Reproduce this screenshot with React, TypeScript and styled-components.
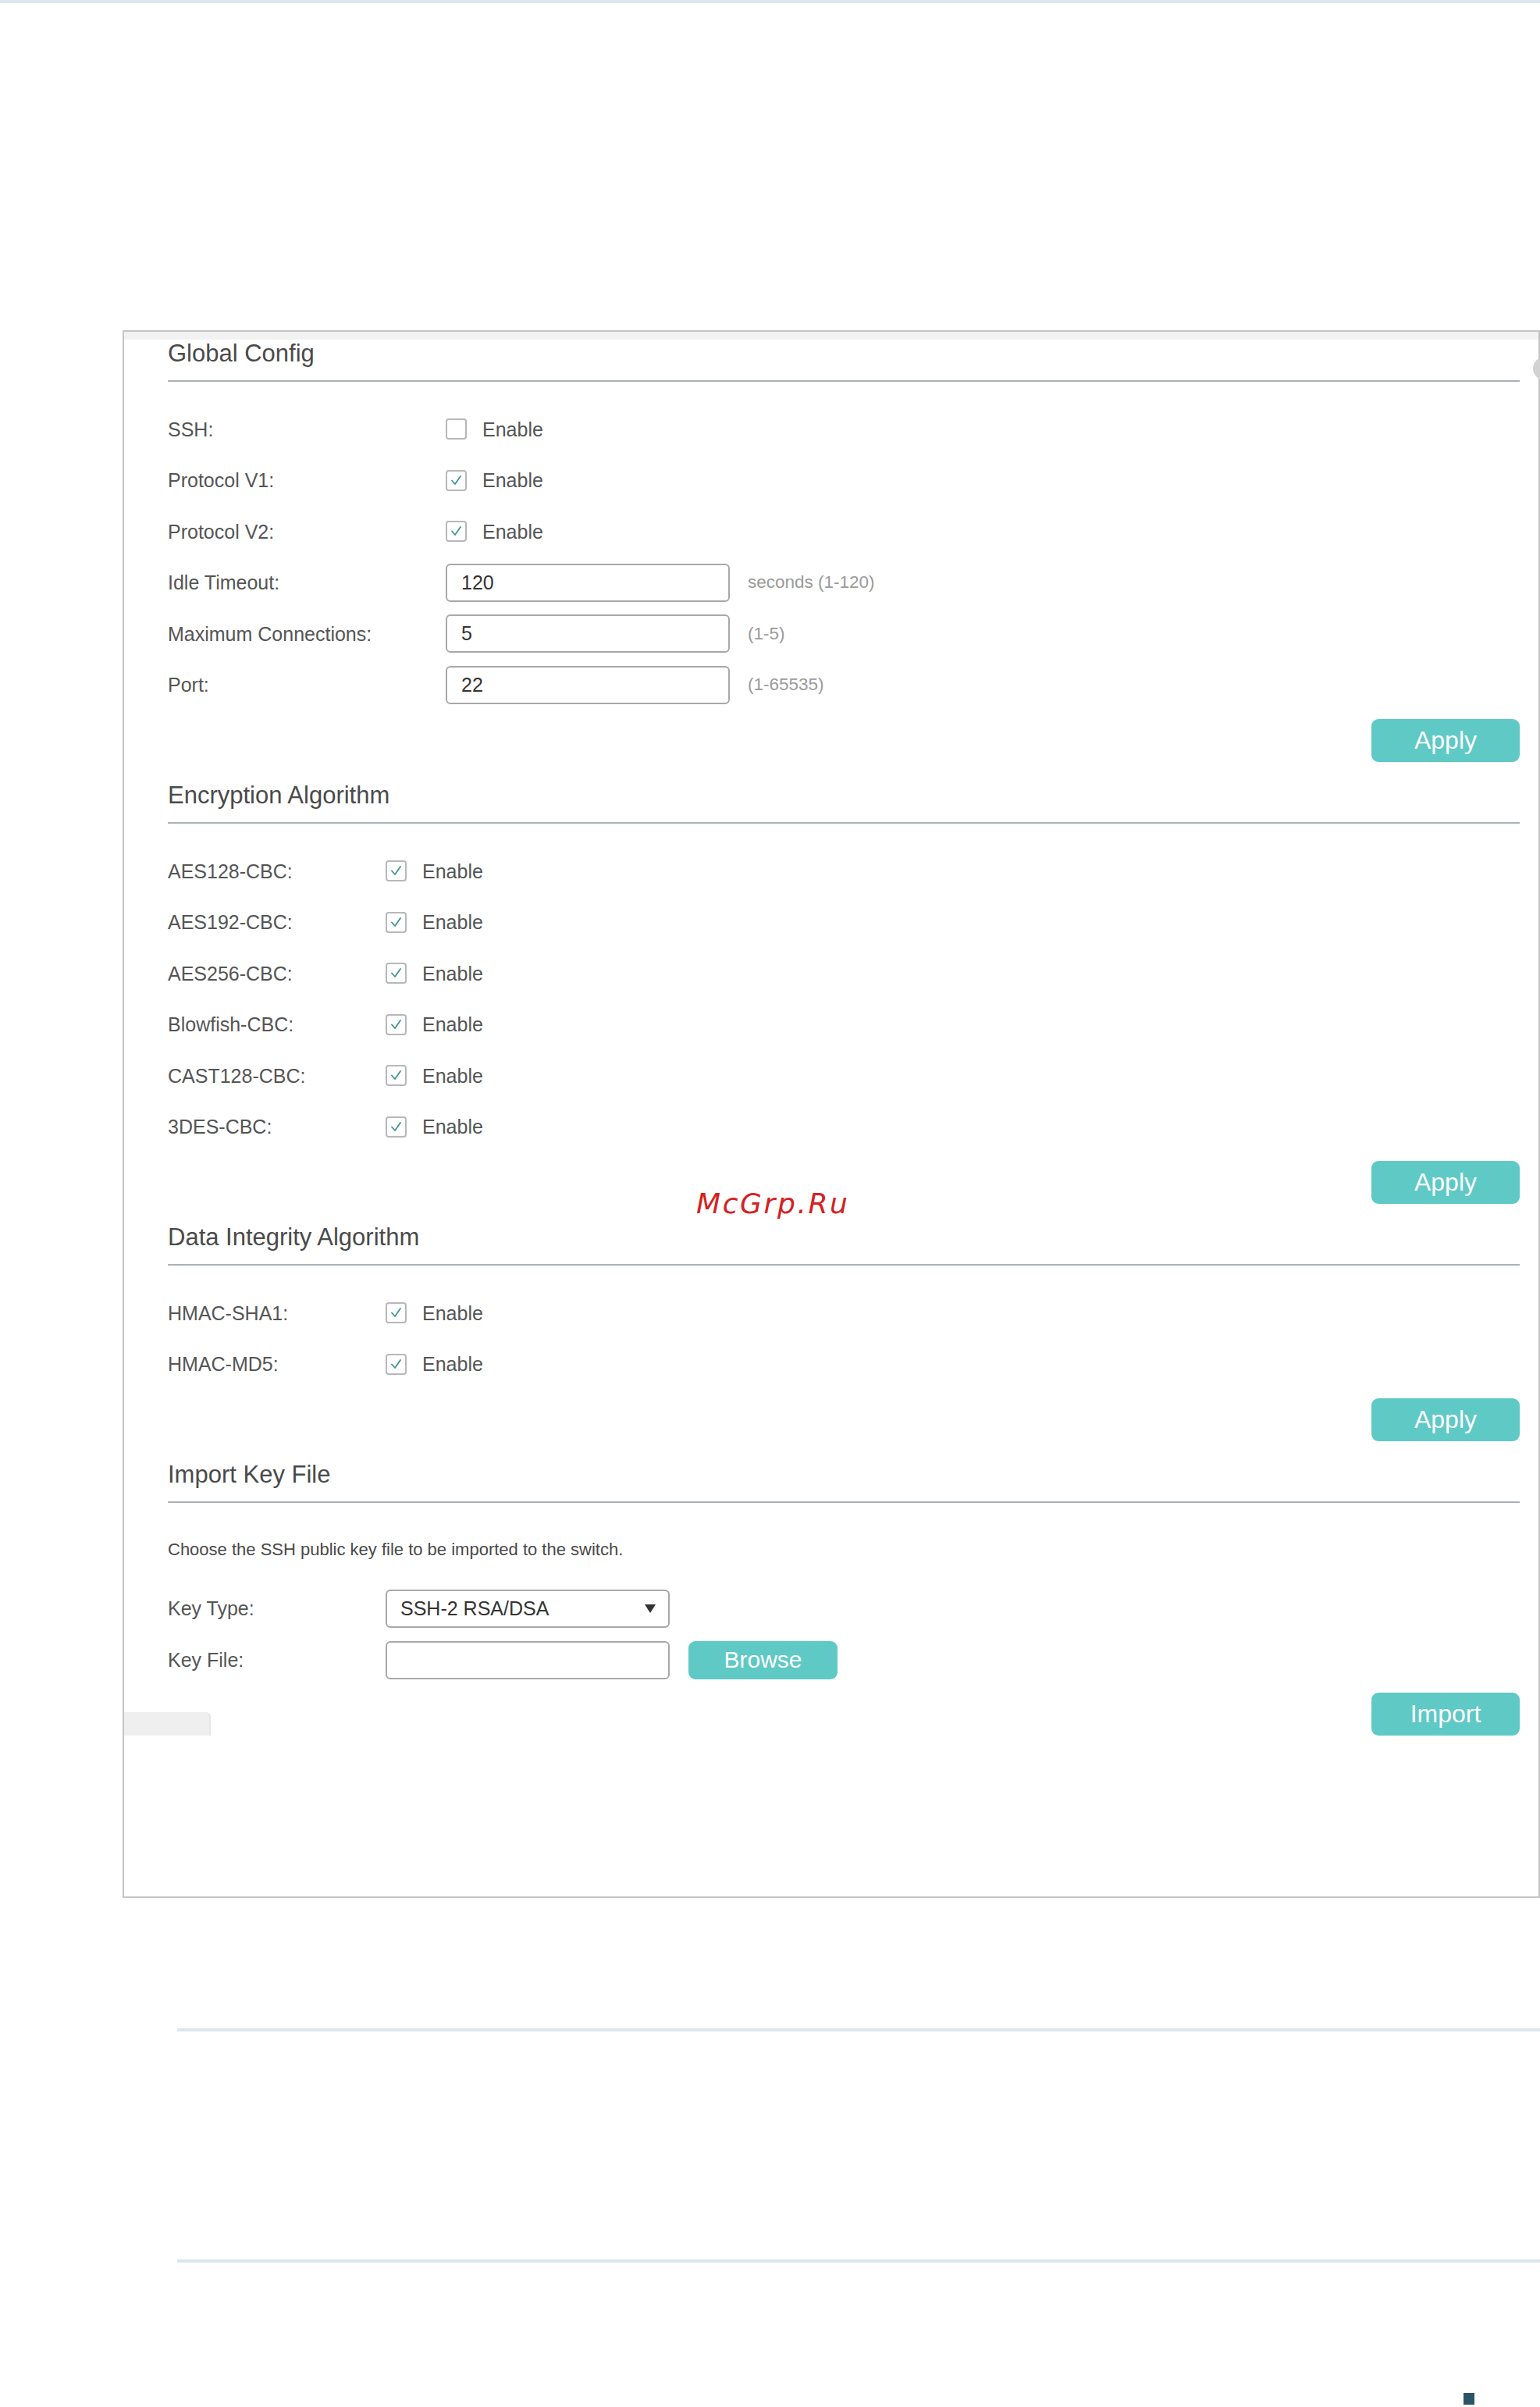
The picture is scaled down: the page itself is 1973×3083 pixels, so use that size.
import React from "react";
import styled, { createGlobalStyle } from "styled-components";

const GlobalStyle = createGlobalStyle`
  html, body { margin: 0; padding: 0; background: #ffffff; }
  body { font-family: "Liberation Sans", Arial, sans-serif; color: #555; }
  * { box-sizing: border-box; }
`;

const Page = styled.div`
  position: relative;
  width: 1973px;
  min-height: 3083px;
  padding-bottom: 4px;
  overflow: hidden;
`;

const TopRule = styled.div`
  height: 4px;
  background: #dce6ec;
`;

const Panel = styled.div`
  margin-top: 419px;
  margin-left: 157px;
  width: calc(100% - 157px);
  border: 2px solid #c4c4c4;
  padding-bottom: 206px;
`;

const Band = styled.div`
  height: 10px;
  background: #f2f2f2;
`;

const Content = styled.div`
  padding: 0 24px 0 56px;
`;

const Section = styled.section<{ $first?: boolean }>`
  margin-top: ${(p) => (p.$first ? "0" : "25px")};
`;

const Heading = styled.h2`
  margin: 0;
  font-size: 31px;
  line-height: 36px;
  font-weight: 400;
  color: #4a4a4a;
  padding-bottom: 16px;
  border-bottom: 2px solid #aab2b6;
`;

const Rows = styled.div<{ $mt?: number }>`
  margin-top: ${(p) => p.$mt ?? 28}px;
  display: flex;
  flex-direction: column;
`;

const Row = styled.div<{ $labelW: number; $h?: number }>`
  display: grid;
  grid-template-columns: ${(p) => p.$labelW}px auto 1fr;
  align-items: center;
  height: ${(p) => p.$h ?? 65.5}px;
`;

const Label = styled.span`
  font-size: 25px;
  line-height: 30px;
  color: #555;
`;

const CheckWrap = styled.label`
  display: flex;
  align-items: center;
  gap: 20px;
  font-size: 25px;
  line-height: 30px;
  color: #555;
`;

const Box = styled.span`
  width: 27px;
  height: 27px;
  border: 2px solid #b8b8b8;
  border-radius: 4px;
  display: flex;
  align-items: center;
  justify-content: center;
  background: #fff;
`;

const TextInput = styled.div<{ $w?: number }>`
  width: ${(p) => p.$w ?? 364}px;
  height: 49px;
  border: 2px solid #a8a8a8;
  border-radius: 6px;
  padding-left: 18px;
  display: flex;
  align-items: center;
  font-size: 25px;
  color: #333;
  background: #fff;
`;

const Hint = styled.span`
  margin-left: 23px;
  font-size: 22.5px;
  color: #9a9a9a;
`;

const Controls = styled.div`
  display: flex;
  align-items: center;
`;

const ButtonRow = styled.div<{ $mt?: number }>`
  display: flex;
  justify-content: flex-end;
  margin-top: ${(p) => p.$mt ?? 11}px;
`;

const TealButton = styled.button<{ $w?: number; $h?: number; $fs?: number }>`
  width: ${(p) => p.$w ?? 190}px;
  height: ${(p) => p.$h ?? 55}px;
  border: none;
  border-radius: 9px;
  background: #5fc9c5;
  color: #fff;
  font-family: "Liberation Sans", Arial, sans-serif;
  font-size: ${(p) => p.$fs ?? 32}px;
  padding: 0;
  display: flex;
  align-items: center;
  justify-content: center;
`;

const BrowseButton = styled(TealButton)`
  margin-left: 24px;
`;

const Description = styled.p`
  margin: 45px 0 0;
  font-size: 22px;
  line-height: 30px;
  color: #4a4a4a;
`;

const Select = styled.div`
  width: 364px;
  height: 49px;
  border: 2px solid #a8a8a8;
  border-radius: 6px;
  padding: 0 14px 0 17px;
  display: flex;
  align-items: center;
  justify-content: space-between;
  font-size: 25px;
  color: #333;
  background: #fff;
`;

const Caret = styled.span`
  width: 0;
  height: 0;
  border-left: 7px solid transparent;
  border-right: 7px solid transparent;
  border-top: 11px solid #333;
  margin-right: 2px;
`;

const Footer = styled.div`
  margin-top: 9px;
  display: flex;
  justify-content: space-between;
  align-items: flex-end;
  padding-right: 24px;
`;

const Tab = styled.div`
  width: 111px;
  height: 30px;
  background: #efefef;
  border-top-right-radius: 6px;
  border-right: 2px solid #e6e6e6;
`;

const Rule = styled.div<{ $mt: number }>`
  margin-top: ${(p) => p.$mt}px;
  margin-left: 227px;
  height: 4px;
  background: #dce6ec;
`;

const Marker = styled.div`
  margin-top: 167px;
  margin-left: 1875px;
  width: 14px;
  height: 15px;
  background: #2b5468;
`;

const Watermark = styled.div`
  position: absolute;
  left: 892px;
  top: 1521px;
  font-family: "DejaVu Sans", sans-serif;
  font-style: italic;
  font-size: 36px;
  line-height: 42px;
  letter-spacing: 2.6px;
  color: #d42222;
`;

const EdgeKnob = styled.div`
  position: absolute;
  left: 1964px;
  top: 457px;
  width: 30px;
  height: 30px;
  border-radius: 50%;
  background: #d2d2d2;
`;

const Check = ({ checked }: { checked: boolean }) => (
  <CheckWrap>
    <Box>
      {checked && (
        <svg width="17" height="17" viewBox="0 0 17 17">
          <polyline
            points="3,8.5 7,13 14,3"
            fill="none"
            stroke="#3f9497"
            strokeWidth="1.8"
            strokeLinecap="round"
            strokeLinejoin="round"
          />
        </svg>
      )}
    </Box>
    Enable
  </CheckWrap>
);

const globalChecks = [
  { label: "SSH:", checked: false },
  { label: "Protocol V1:", checked: true },
  { label: "Protocol V2:", checked: true },
];

const globalInputs = [
  { label: "Idle Timeout:", value: "120", hint: "seconds (1-120)" },
  { label: "Maximum Connections:", value: "5", hint: "(1-5)" },
  { label: "Port:", value: "22", hint: "(1-65535)" },
];

const encryption = [
  "AES128-CBC:",
  "AES192-CBC:",
  "AES256-CBC:",
  "Blowfish-CBC:",
  "CAST128-CBC:",
  "3DES-CBC:",
];

const integrity = ["HMAC-SHA1:", "HMAC-MD5:"];

export default function App() {
  return (
    <Page>
      <GlobalStyle />
      <TopRule />
      <Panel>
        <Band />
        <Content>
          <Section $first>
            <Heading>Global Config</Heading>
            <Rows>
              {globalChecks.map((r) => (
                <Row key={r.label} $labelW={356}>
                  <Label>{r.label}</Label>
                  <Check checked={r.checked} />
                </Row>
              ))}
              {globalInputs.map((r) => (
                <Row key={r.label} $labelW={356}>
                  <Label>{r.label}</Label>
                  <Controls>
                    <TextInput>{r.value}</TextInput>
                    <Hint>{r.hint}</Hint>
                  </Controls>
                </Row>
              ))}
            </Rows>
            <ButtonRow>
              <TealButton>Apply</TealButton>
            </ButtonRow>
          </Section>

          <Section>
            <Heading>Encryption Algorithm</Heading>
            <Rows>
              {encryption.map((l) => (
                <Row key={l} $labelW={279}>
                  <Label>{l}</Label>
                  <Check checked />
                </Row>
              ))}
            </Rows>
            <ButtonRow>
              <TealButton>Apply</TealButton>
            </ButtonRow>
          </Section>

          <Section>
            <Heading>Data Integrity Algorithm</Heading>
            <Rows>
              {integrity.map((l) => (
                <Row key={l} $labelW={279}>
                  <Label>{l}</Label>
                  <Check checked />
                </Row>
              ))}
            </Rows>
            <ButtonRow>
              <TealButton>Apply</TealButton>
            </ButtonRow>
          </Section>

          <Section>
            <Heading>Import Key File</Heading>
            <Description>
              Choose the SSH public key file to be imported to the switch.
            </Description>
            <Rows $mt={27}>
              <Row $labelW={279} $h={66}>
                <Label>Key Type:</Label>
                <Select>
                  <span>SSH-2 RSA/DSA</span>
                  <Caret />
                </Select>
              </Row>
              <Row $labelW={279} $h={66}>
                <Label>Key File:</Label>
                <Controls>
                  <TextInput />
                  <BrowseButton $w={191} $h={49} $fs={30}>
                    Browse
                  </BrowseButton>
                </Controls>
              </Row>
            </Rows>
          </Section>
        </Content>
        <Footer>
          <Tab />
          <TealButton>Import</TealButton>
        </Footer>
      </Panel>
      <Rule $mt={167} />
      <Rule $mt={292} />
      <Marker />
      <Watermark>McGrp.Ru</Watermark>
      <EdgeKnob />
    </Page>
  );
}
